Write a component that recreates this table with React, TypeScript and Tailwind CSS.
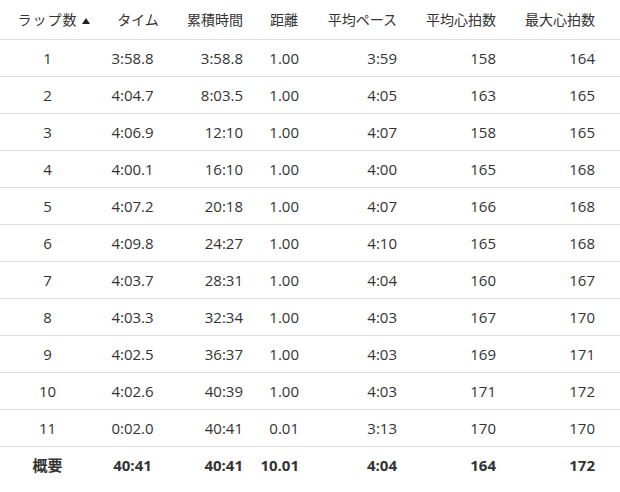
import React from "react"

type Lap = {
  lap: string
  time: string
  total: string
  dist: string
  pace: string
  avgHr: string
  maxHr: string
}

const laps: Lap[] = [
  { lap: "1", time: "3:58.8", total: "3:58.8", dist: "1.00", pace: "3:59", avgHr: "158", maxHr: "164" },
  { lap: "2", time: "4:04.7", total: "8:03.5", dist: "1.00", pace: "4:05", avgHr: "163", maxHr: "165" },
  { lap: "3", time: "4:06.9", total: "12:10", dist: "1.00", pace: "4:07", avgHr: "158", maxHr: "165" },
  { lap: "4", time: "4:00.1", total: "16:10", dist: "1.00", pace: "4:00", avgHr: "165", maxHr: "168" },
  { lap: "5", time: "4:07.2", total: "20:18", dist: "1.00", pace: "4:07", avgHr: "166", maxHr: "168" },
  { lap: "6", time: "4:09.8", total: "24:27", dist: "1.00", pace: "4:10", avgHr: "165", maxHr: "168" },
  { lap: "7", time: "4:03.7", total: "28:31", dist: "1.00", pace: "4:04", avgHr: "160", maxHr: "167" },
  { lap: "8", time: "4:03.3", total: "32:34", dist: "1.00", pace: "4:03", avgHr: "167", maxHr: "170" },
  { lap: "9", time: "4:02.5", total: "36:37", dist: "1.00", pace: "4:03", avgHr: "169", maxHr: "171" },
  { lap: "10", time: "4:02.6", total: "40:39", dist: "1.00", pace: "4:03", avgHr: "171", maxHr: "172" },
  { lap: "11", time: "0:02.0", total: "40:41", dist: "0.01", pace: "3:13", avgHr: "170", maxHr: "170" },
]

const summary: Lap = { lap: "概要", time: "40:41", total: "40:41", dist: "10.01", pace: "4:04", avgHr: "164", maxHr: "172" }

const grid = "grid grid-cols-[95px_75px_83px_56px_98px_99px_114px] items-center"

function Row({ r, bold, last }: { r: Lap; bold?: boolean; last?: boolean }) {
  return (
    <div className={`${grid} h-[37px] ${last ? "" : "border-b border-[#dddddd]"} ${bold ? "font-bold" : ""}`}>
      <div className="text-center">{r.lap}</div>
      <div className="text-center">{r.time}</div>
      <div className="text-right pr-[10px]">{r.total}</div>
      <div className="text-right pr-[10px]">{r.dist}</div>
      <div className="text-right pr-[10px]">{r.pace}</div>
      <div className="text-right pr-[10px]">{r.avgHr}</div>
      <div className="text-right pr-[25px]">{r.maxHr}</div>
    </div>
  )
}

export default function App() {
  return (
    <div className="w-[620px] h-[492px] bg-white text-[#333333] text-[15px] font-['Open_Sans','Noto_Sans_CJK_JP',sans-serif]">
      <div className={`${grid} h-[40px] border-b border-[#dddddd] text-[14px]`}>
        <div className="relative text-center tracking-[1px]">
          ラップ数
          <svg className="absolute left-[82px] top-1/2 -translate-y-1/2 mt-[1px]" width="8" height="6" viewBox="0 0 8 6">
            <path d="M4 0L8 6H0Z" fill="#222" />
          </svg>
        </div>
        <div className="text-center pl-[11px]">タイム</div>
        <div className="text-right pr-[10px]">累積時間</div>
        <div className="text-right pr-[11px]">距離</div>
        <div className="text-right pr-[10px]">平均ペース</div>
        <div className="text-right pr-[10px]">平均心拍数</div>
        <div className="text-right pr-[25px]">最大心拍数</div>
      </div>
      {laps.map((r) => (
        <Row key={r.lap} r={r} />
      ))}
      <Row r={summary} bold last />
    </div>
  )
}
